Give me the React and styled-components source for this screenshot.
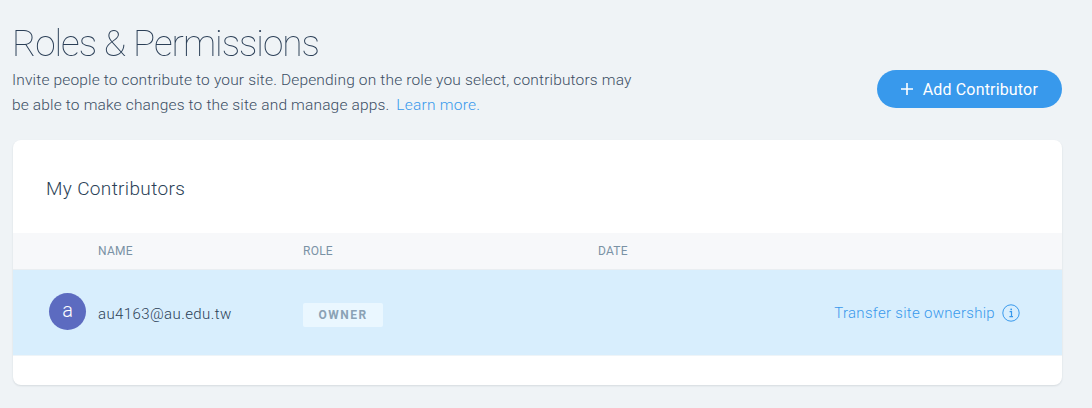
import React from 'react'
import styled, { createGlobalStyle } from 'styled-components'

const GlobalStyle = createGlobalStyle`
  html, body {
    margin: 0;
    padding: 0;
    background: #eff3f6;
    font-family: "Liberation Sans", Arial, sans-serif;
  }
`;

const Page = styled.div`
  width: 1092px;
  height: 408px;
  box-sizing: border-box;
  padding: 22px 30px 0 13px;
  overflow: hidden;
`;

const Header = styled.header`
  display: flex;
  align-items: flex-start;
  justify-content: space-between;
  height: 118px;
`;

const Title = styled.h1`
  margin: 0 0 2px -1px;
  font-family: Roboto, sans-serif;
  font-size: 37px;
  line-height: 44px;
  font-weight: 100;
  letter-spacing: -1.05px;
  color: #2b3f57;
  will-change: opacity;
`;

const Intro = styled.p`
  margin: 0 0 0 -1px;
  width: 630px;
  font-family: Roboto, sans-serif;
  font-size: 15.5px;
  line-height: 25px;
  font-weight: 300;
  letter-spacing: 0.16px;
  color: #3b4e64;
`;

const TextLink = styled.a`
  margin-left: 3px;
  letter-spacing: 0.25px;
  color: #3899ec;
`;

const AddButton = styled.button`
  display: flex;
  align-items: center;
  gap: 9px;
  height: 38px;
  margin-top: 48px;
  padding: 0 24px 0 23px;
  border: 0;
  border-radius: 19px;
  background: #3899ec;
  color: #fff;
  font-family: Roboto, sans-serif;
  font-size: 16px;
  font-weight: 400;
  letter-spacing: 0.17px;
`;

const Card = styled.section`
  height: 245px;
  background: #fff;
  border-radius: 8px;
  box-shadow: 0 1px 2px rgba(22, 45, 61, 0.12);
  overflow: hidden;
`;

const CardTitle = styled.h2`
  margin: 0;
  height: 93px;
  box-sizing: border-box;
  padding: 37px 0 0 33px;
  font-family: Roboto, sans-serif;
  font-size: 19px;
  line-height: 24px;
  font-weight: 300;
  letter-spacing: 0.35px;
  color: #2b3f57;
`;

const Columns = styled.div`
  display: grid;
  grid-template-columns: 85px 205px 295px 1fr;
  align-items: center;
  box-sizing: border-box;
  height: ${props => props.$height}px;
  background: ${props => props.$background};
  border-bottom: 1px solid ${props => props.$line};
`;

const ColumnLabel = styled.span`
  grid-column: ${props => props.$column};
  margin-top: -1px;
  font-family: Roboto, sans-serif;
  font-size: 12px;
  font-weight: 400;
  letter-spacing: 0.25px;
  color: #7a92a5;
`;

const NameCell = styled.div`
  display: flex;
  align-items: center;
  grid-column: 1 / 3;
  padding-left: 36px;
  gap: 12px;
`;

const Avatar = styled.div`
  display: flex;
  align-items: center;
  justify-content: center;
  width: 37px;
  height: 37px;
  margin-top: -3px;
  padding-bottom: 3px;
  box-sizing: border-box;
  border-radius: 50%;
  background: #5c6bc0;
  color: #fff;
  font-family: Roboto, sans-serif;
  font-size: 20px;
  font-weight: 300;
`;

const Email = styled.span`
  margin-top: 2px;
  font-family: Roboto, sans-serif;
  font-size: 15px;
  font-weight: 300;
  letter-spacing: 0.4px;
  color: #2b3f57;
`;

const RoleBadge = styled.span`
  grid-column: 3;
  justify-self: start;
  width: 80px;
  height: 24px;
  margin-top: 5px;
  border-radius: 2px;
  background: #eaf7ff;
  color: #8ba2b5;
  font-family: Roboto, sans-serif;
  font-size: 12px;
  font-weight: 700;
  letter-spacing: 1.5px;
  line-height: 24px;
  text-align: center;
`;

const TransferCell = styled.div`
  grid-column: 4;
  display: flex;
  align-items: center;
  justify-content: flex-end;
  gap: 7px;
  padding-right: 42px;
  font-family: Roboto, sans-serif;
  font-size: 15px;
  font-weight: 300;
  letter-spacing: 0.3px;
  color: #3899ec;
`;

const InfoIcon = () => (
  <svg width="18" height="18" viewBox="0 0 18 18" fill="none">
    <circle cx="9" cy="9" r="8.2" stroke="#3899ec" strokeWidth="1" />
    <path d="M7.6 7.7H9.5V12.6M7.4 12.6H11" stroke="#3899ec" strokeWidth="1.2" />
    <rect x="8.4" y="4.6" width="1.6" height="1.6" fill="#3899ec" />
  </svg>
);

const PlusIcon = () => (
  <svg width="14" height="14" viewBox="0 0 14 14" fill="none">
    <path d="M7 1V13M1 7H13" stroke="#fff" strokeWidth="1.6" />
  </svg>
);

const App = () => (
  <Page>
    <GlobalStyle />
    <Header>
      <div>
        <Title>Roles &amp; Permissions</Title>
        <Intro>
          Invite people to contribute to your site. Depending on the role you select, contributors may
          be able to make changes to the site and manage apps. <TextLink>Learn more.</TextLink>
        </Intro>
      </div>
      <AddButton><PlusIcon />Add Contributor</AddButton>
    </Header>
    <Card>
      <CardTitle>My Contributors</CardTitle>
      <Columns $height={37} $background="#f7f8fa" $line="#eaeef1">
        <ColumnLabel $column={2}>NAME</ColumnLabel>
        <ColumnLabel $column={3}>ROLE</ColumnLabel>
        <ColumnLabel $column={4}>DATE</ColumnLabel>
      </Columns>
      <Columns $height={86} $background="#d8eefd" $line="#eef4f8">
        <NameCell>
          <Avatar>a</Avatar>
          <Email>au4163@au.edu.tw</Email>
        </NameCell>
        <RoleBadge>OWNER</RoleBadge>
        <TransferCell>Transfer site ownership <InfoIcon /></TransferCell>
      </Columns>
    </Card>
  </Page>
);

export default App;
